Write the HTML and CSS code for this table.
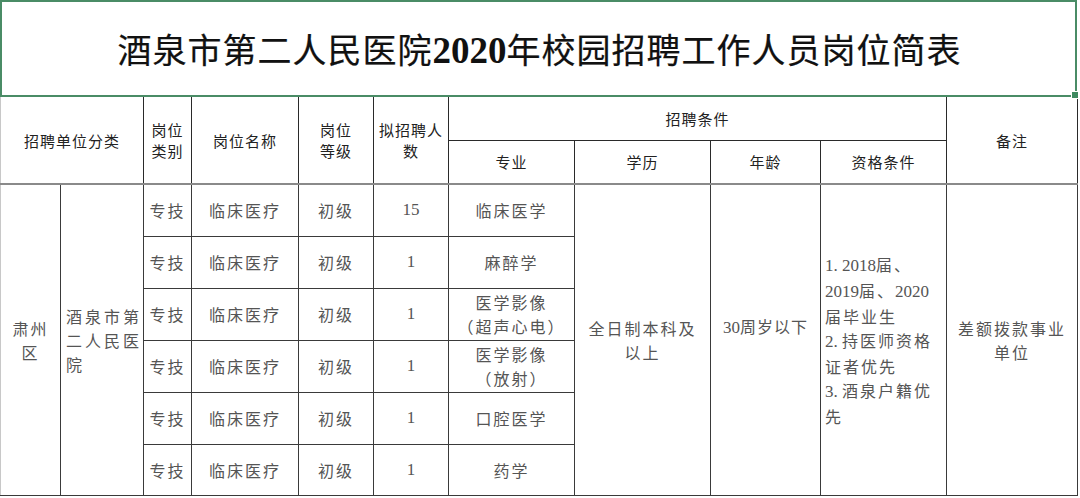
FILE: index.html
```html
<!DOCTYPE html>
<html lang="zh-CN">
<head>
<meta charset="utf-8">
<title>酒泉市第二人民医院2020年校园招聘工作人员岗位简表</title>
<link rel="stylesheet" href="styles.css">
</head>
<body>
<div class="sheet">
  <div class="title">
    <h1>酒泉市第二人民医院<span class="num">2020</span>年校园招聘工作人员岗位简表</h1>
    <span class="handle"></span>
  </div>
  <table class="grid">
    <colgroup>
      <col class="w60"><col class="w83"><col class="w48"><col class="w107"><col class="w75"><col class="w75"><col class="w126"><col class="w136"><col class="w110"><col class="w126"><col class="w131">
    </colgroup>
    <thead>
      <tr class="h1">
        <th colspan="2" rowspan="2" class="first">招聘单位分类</th>
        <th rowspan="2">岗位<br>类别</th>
        <th rowspan="2">岗位名称</th>
        <th rowspan="2">岗位<br>等级</th>
        <th rowspan="2">拟招聘人<br>数</th>
        <th colspan="4">招聘条件</th>
        <th rowspan="2">备注</th>
      </tr>
      <tr class="h2">
        <th>专业</th>
        <th>学历</th>
        <th>年龄</th>
        <th>资格条件</th>
      </tr>
    </thead>
    <tbody>
      <tr class="top">
        <td rowspan="6" class="first">肃州<br>区</td>
        <td rowspan="6" class="unit">酒泉市第<br>二人民医<br>院</td>
        <td>专技</td>
        <td>临床医疗</td>
        <td>初级</td>
        <td class="n">15</td>
        <td>临床医学</td>
        <td rowspan="6">全日制本科及<br>以上</td>
        <td rowspan="6" class="age"><span class="n">30</span>周岁以下</td>
        <td rowspan="6" class="qual"><span class="n">1.&nbsp;2018</span>届、<br><span class="n">2019</span>届、<span class="n">2020</span><br>届毕业生<br><span class="n">2.&nbsp;</span>持医师资格<br>证者优先<br><span class="n">3.&nbsp;</span>酒泉户籍优<br>先</td>
        <td rowspan="6">差额拨款事业<br>单位</td>
      </tr>
      <tr>
        <td>专技</td><td>临床医疗</td><td>初级</td><td class="n">1</td><td>麻醉学</td>
      </tr>
      <tr>
        <td>专技</td><td>临床医疗</td><td>初级</td><td class="n">1</td><td>医学影像<br>（超声心电）</td>
      </tr>
      <tr>
        <td>专技</td><td>临床医疗</td><td>初级</td><td class="n">1</td><td>医学影像<br>（放射）</td>
      </tr>
      <tr>
        <td>专技</td><td>临床医疗</td><td>初级</td><td class="n">1</td><td>口腔医学</td>
      </tr>
      <tr>
        <td>专技</td><td>临床医疗</td><td>初级</td><td class="n">1</td><td>药学</td>
      </tr>
    </tbody>
  </table>
</div>
</body>
</html>
```

FILE: styles.css
```css
html, body {
  margin: 0;
  padding: 0;
  background: #ffffff;
}

.sheet {
  width: 1080px;
  height: 498px;
  overflow: hidden;
  background: #fff;
}

.title {
  position: relative;
  box-sizing: border-box;
  width: 1077px;
  height: 97px;
  border: 2px solid #4a8c66;
  display: flex;
  align-items: center;
  justify-content: center;
}

.title h1 {
  margin: 0;
  padding-left: 2px;
  font-family: "Noto Sans CJK SC", sans-serif;
  font-weight: normal;
  font-size: 34px;
  letter-spacing: 1px;
  color: #111;
  -webkit-text-stroke: 0.2px #111;
}

.title .num {
  font-family: "Liberation Serif", serif;
  font-weight: bold;
  font-size: 37px;
  letter-spacing: 0;
  -webkit-text-stroke: 0;
}

.handle {
  position: absolute;
  right: -4px;
  bottom: -4px;
  width: 6px;
  height: 6px;
  background: #3f8a60;
  border: 1px solid #fff;
}

.grid {
  border-collapse: collapse;
  table-layout: fixed;
  width: 1077px;
}

.w60 { width: 60px; }
.w83 { width: 83px; }
.w48 { width: 48px; }
.w107 { width: 107px; }
.w75 { width: 75px; }
.w126 { width: 126px; }
.w136 { width: 136px; }
.w110 { width: 110px; }
.w131 { width: 131px; }

.grid th,
.grid td {
  border: 1px solid #2a2a2a;
  padding: 0;
  text-align: center;
  vertical-align: middle;
  overflow: hidden;
}

.grid th {
  font-family: "Noto Sans CJK SC", sans-serif;
  font-weight: normal;
  font-size: 15px;
  line-height: 21px;
  letter-spacing: 1px;
  color: #222;
}

.grid .h1 th {
  border-top: none;
}

.grid .h1 {
  height: 43px;
}

.grid .h2 {
  height: 44px;
}

.grid td {
  font-family: "Noto Sans CJK SC", sans-serif;
  font-size: 16px;
  line-height: 24px;
  letter-spacing: 2px;
  color: #555;
  border-color: #3a3a3a;
}

.grid tbody tr {
  height: 52px;
}

.grid tbody tr:last-child {
  height: 51px;
}

.grid .top td {
  border-top: 2px solid #8a8a8a;
}

.grid .first {
  border-left: 1px solid #c8c8c8;
}

.grid .unit {
  text-align: left;
  padding-left: 5px;
  letter-spacing: 3px;
}

.grid .n {
  font-family: "Liberation Serif", serif;
  font-size: 17px;
  letter-spacing: 0;
}

.grid .age {
  letter-spacing: 1px;
  padding-bottom: 26px;
}

.grid .qual {
  text-align: left;
  padding-left: 4px;
  letter-spacing: 2px;
}
```
